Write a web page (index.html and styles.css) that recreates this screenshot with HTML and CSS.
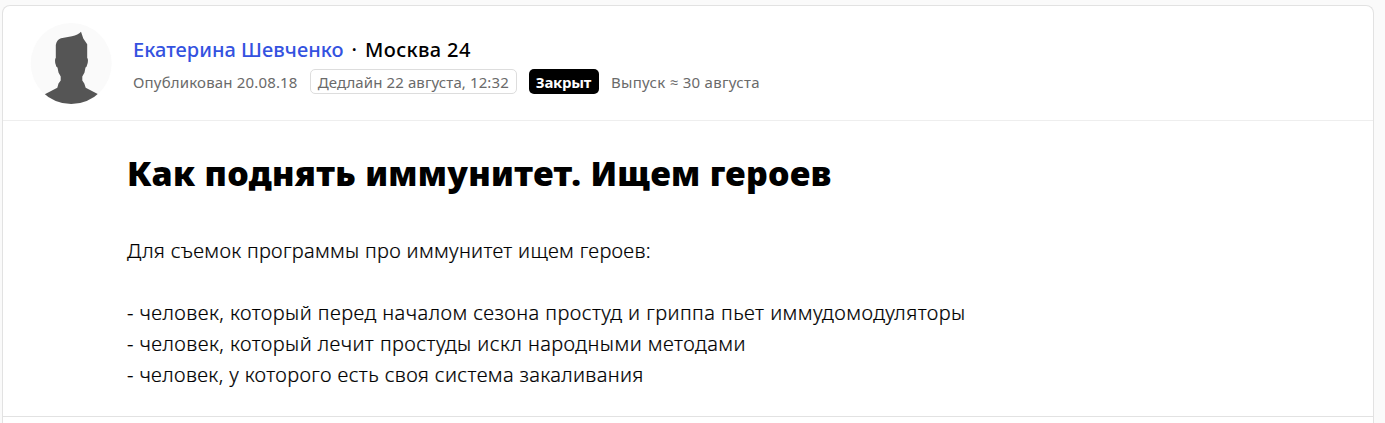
FILE: index.html
```html
<!DOCTYPE html>
<html lang="ru">
<head>
<meta charset="utf-8">
<title>Как поднять иммунитет. Ищем героев</title>
<link rel="stylesheet" href="styles.css">
</head>
<body>
<article class="card">
  <header class="card-header">
    <svg class="avatar" viewBox="0 0 82 82" aria-hidden="true">
      <defs><clipPath id="avatar-circle"><circle cx="41.2" cy="41.5" r="40.5"/></clipPath></defs>
      <circle cx="41.2" cy="41.5" r="40.5" fill="#fafafa"/>
      <path clip-path="url(#avatar-circle)" fill="#555" d="M51 9.800 L53.300 16.500 L57.200 22.300 V36 Q58.400 36.500 57.700 41 L56.500 44.800 L55.500 45.500 L54.500 50.500 L52.300 54.500 V58.500 L54.300 61.500 L55.700 65.800 L67.700 72 L74 75 V84 H9 V75 L15.300 72 L27.300 65.800 L28.500 61.500 L30.700 58.500 V54.500 L28.500 50.500 L27.500 45.500 L26.400 44.800 L25.200 41 Q24.700 36.500 25.800 36 V23 Q26.500 18 31 16.300 L42 14.200 Q48 13 51 9.800Z"/>
    </svg>
    <div class="info">
      <div class="author"><a class="author-name">Екатерина Шевченко</a><span class="dot">·</span><span class="outlet">Москва 24</span></div>
      <div class="meta">
        <span class="published">Опубликован 20.08.18</span>
        <span class="deadline">Дедлайн 22 августа, 12:32</span>
        <span class="status">Закрыт</span>
        <span class="release">Выпуск ≈ 30 августа</span>
      </div>
    </div>
  </header>
  <section class="content">
    <h1 class="title">Как поднять иммунитет. Ищем героев</h1>
    <p class="text text-intro">Для съемок программы про иммунитет ищем героев:</p>
    <p class="text">- человек, который перед началом сезона простуд и гриппа пьет иммудомодуляторы<br>- человек, который лечит простуды искл народными методами<br><span class="text-last">- человек, у которого есть своя система закаливания</span></p>
  </section>
  <footer class="card-footer"></footer>
</article>
</body>
</html>
```
FILE: styles.css
```css
* { box-sizing: border-box; }
body {
  display: flow-root;
  margin: 0;
  height: 423px;
  background: #fafafa;
  color: #000;
  font-family: "Noto Sans", "Open Sans", sans-serif;
}
.card {
  width: 1372px;
  height: 418px;
  margin: 5px 0 0 2px;
  background: #fff;
  border: 1px solid #e2e2e2;
  border-bottom: 0;
  border-radius: 8px 8px 0 0;
}
.card-header {
  display: flex;
  height: 115px;
  padding: 16px 0 0 27px;
  border-bottom: 1px solid #eee;
}
.avatar { width: 82px; height: 82px; flex: none; }
.info { padding: 13px 0 0 21px; white-space: nowrap; }
.author {
  display: flex;
  height: 30px;
  line-height: 30px;
  font-size: 20px;
  font-weight: 500;
  letter-spacing: 0.04px;
}
.author-name { color: #3452e0; }
.dot { margin: 0 8px; }
.outlet { letter-spacing: 0.35px; }
.meta {
  display: flex;
  align-items: center;
  margin-top: 4px;
  height: 25px;
  font-size: 15px;
  letter-spacing: 0.17px;
  color: #6a6a6a;
}
.published, .release {
  height: 25px;
  line-height: 27px;
}
.deadline {
  height: 25px;
  line-height: 25px;
  margin-left: 12px;
  padding: 0 7px;
  border: 1px solid #ddd;
  border-radius: 5px;
  letter-spacing: 0.1px;
}
.status {
  height: 25px;
  line-height: 27px;
  margin: 0 12px;
  padding: 0 8px 0 7px;
  background: #000;
  color: #fff;
  font-weight: 700;
  letter-spacing: -0.3px;
  border-radius: 5px;
}
.release { letter-spacing: 0.28px; }
.content {
  height: 295px;
  padding: 27px 0 0 124px;
  white-space: nowrap;
}
.title {
  margin: 0 0 37px;
  font-size: 34px;
  line-height: 50px;
  font-weight: 900;
  letter-spacing: 0.3px;
}
.text {
  margin: 0 0 31px;
  font-size: 20px;
  line-height: 31px;
  font-weight: 300;
  letter-spacing: 0.45px;
  -webkit-text-stroke: 0.2px #000;
}
.text-intro { letter-spacing: 0.31px; }
.text-last { letter-spacing: 0.38px; }
.card-footer { border-top: 1px solid #e2e2e2; }
```
